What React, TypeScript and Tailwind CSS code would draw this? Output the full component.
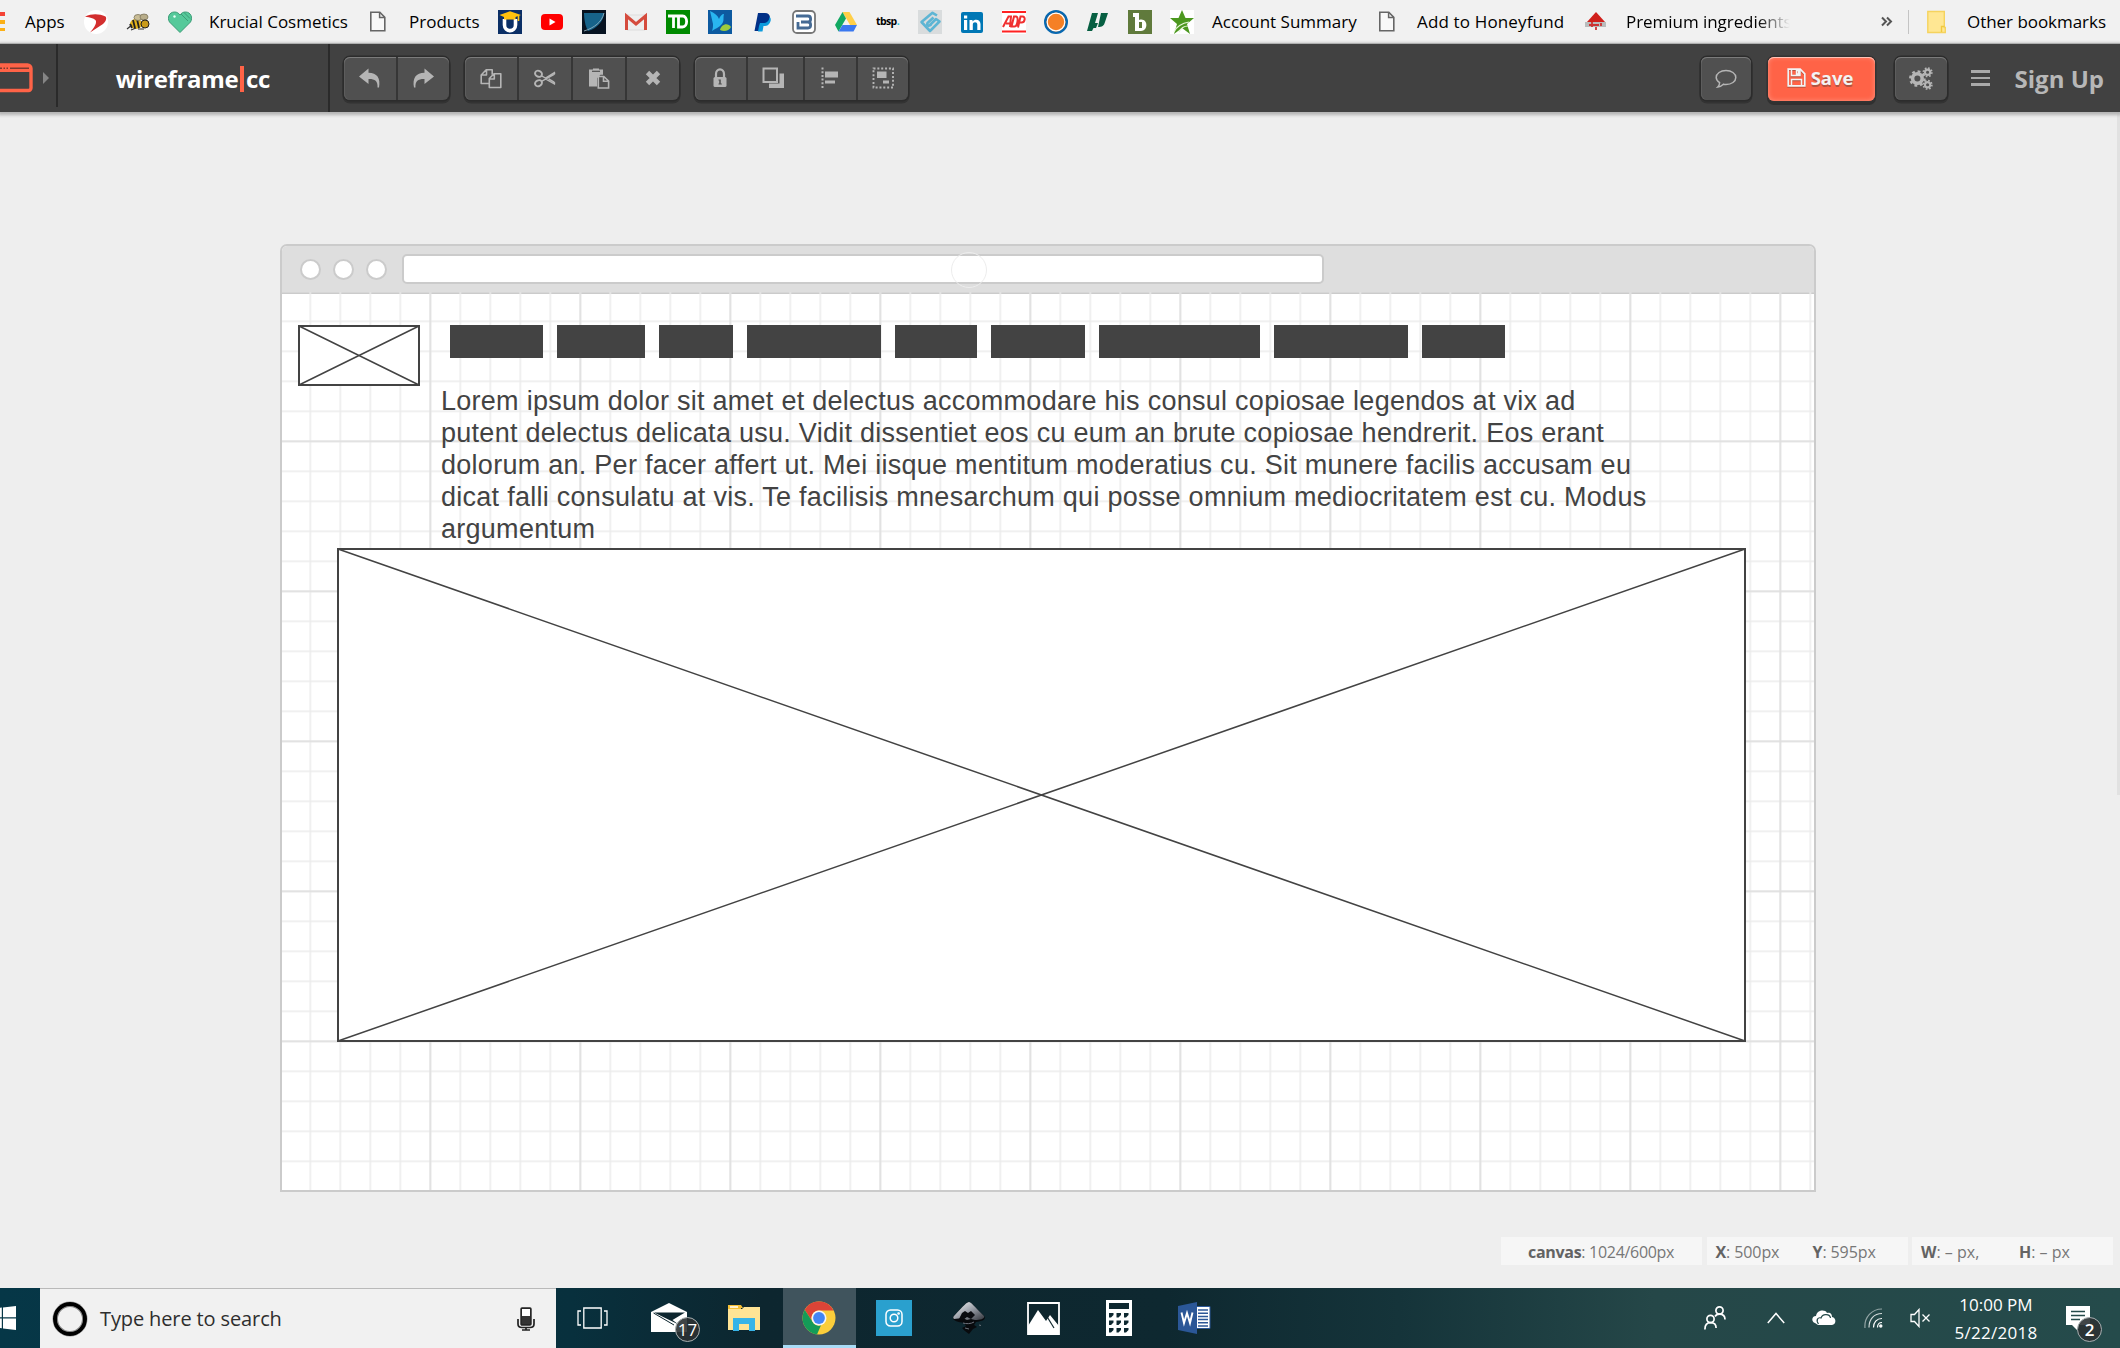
import type { ReactNode } from "react";

const SANS = "font-['Open_Sans','Noto_Sans',sans-serif]";

/* ---------- Bookmark bar ---------- */

function Fav({ children }: { children: ReactNode }) {
  return (
    <svg className="mr-[18px] h-6 w-6 shrink-0" viewBox="0 0 24 24">
      {children}
    </svg>
  );
}

function DocIcon() {
  return (
    <Fav>
      <path d="M1.8 2.2h9l5 5.2v13.4h-14z" fill="#f8f8f8" stroke="#666" strokeWidth="1.6" />
      <path d="M10.6 2.2v5.4h5.2" fill="none" stroke="#666" strokeWidth="1.5" />
    </Fav>
  );
}

function Label({ children, className }: { children: ReactNode; className: string }) {
  return (
    <span className={`block shrink-0 pl-px text-[17px] leading-6 whitespace-nowrap text-black ${className}`}>
      {children}
    </span>
  );
}

function BookmarkBar() {
  return (
    <div className="flex h-11 items-center overflow-hidden border-b border-[#a5a8a8] bg-[#f1f1f1]">
      <svg className="mr-[18px] h-6 w-[6px] shrink-0" viewBox="0 0 6 24">
        <path d="M0 2h5v4H0z" fill="#f44336" />
        <path d="M0 10h5v4H0zM0 18h5v3H0z" fill="#fbb017" />
      </svg>
      <Label className="w-[60px]">Apps</Label>
      <Fav>
        <circle cx="12" cy="12" r="12" fill="#fff" />
        <path d="M1 6.500c7-3 14-2.800 20.500 0 1.500 1.500.5 5-2.500 7.500l-13 8.500c3.500-4 6.500-8 6-11.500C11.500 8.500 6 7.500 1 6.500z" fill="#d32f2f" />
      </Fav>
      <Fav>
        <ellipse cx="10" cy="14" rx="6" ry="5" fill="#e3b21a" />
        <path d="M7 10l2 8M11 9l2 9M4 14l2 4" stroke="#222" strokeWidth="1.8" />
        <ellipse cx="12" cy="7.500" rx="4" ry="3" fill="#c9bd96" stroke="#7c735a" strokeWidth=".8" />
        <ellipse cx="18" cy="7" rx="4" ry="3" fill="#b8ad8a" stroke="#7c735a" strokeWidth=".8" />
        <circle cx="19" cy="14" r="4" fill="#c99b1c" stroke="#222" strokeWidth="1" />
        <path d="M1 19l5-4M5 20l5-2M12 19l6 0" stroke="#333" strokeWidth="1.200" />
      </Fav>
      <Fav>
        <path d="M12 22.500L1.500 12C-1 8 1 2 6.500 2c2.500 0 4 1 5.500 3 1.500-2 3-3 5.500-3C23 2 25 8 22.500 12z" fill="#55c99a" stroke="#3b9c76" strokeWidth="1" />
        <path d="M13 4l7 7M16 2.500l6 6" stroke="#3b9c76" strokeWidth="1" fill="none" />
        <circle cx="6.500" cy="6.500" r="1.200" fill="#eafff6" />
      </Fav>
      <Label className="-ml-[2px] w-[161px] -tracking-[0.020px]">Krucial Cosmetics</Label>
      <DocIcon />
      <Label className="-ml-[3px] w-[90px]">Products</Label>
      <Fav>
        <path d="M0 0h24v24H0z" fill="#0b2f66" />
        <path d="M6.500 9v6c0 7.500 11 7.500 11 0V9" fill="none" stroke="#fff" strokeWidth="3.600" />
        <path d="M12 1.200L1.500 5 6 7v2.500h11.500V7L23 5z" fill="#ffc20e" />
        <path d="M20.500 5v6" stroke="#ffc20e" strokeWidth="1.600" />
      </Fav>
      <Fav>
        <rect x="1" y="4" width="22" height="16" rx="4" fill="#f00" />
        <path d="M9.500 8.500v7l6-3.500z" fill="#fff" />
      </Fav>
      <Fav>
        <path d="M0 0h24v24H0z" fill="#071321" />
        <path d="M2 3h20c0 7-6 15-16 18C3.500 17 2 9 2 3z" fill="#17638a" />
        <path d="M2 21C12 18 20 12 22 3" fill="none" stroke="#9db9c6" strokeWidth=".8" />
      </Fav>
      <Fav>
        <path d="M3 5h18v15H3z" fill="#eee" stroke="#ddd" />
        <path d="M2.500 20V6L12 14l9.500-8v14" fill="none" stroke="#d54b3d" strokeWidth="3" />
      </Fav>
      <Fav>
        <path d="M0 0h24v24H0z" fill="#008a00" />
        <path d="M2 6h11M7.500 6v12M12.500 6v11h4c5.500 0 5.500-11 0-11z" fill="none" stroke="#fff" strokeWidth="2.800" />
      </Fav>
      <Fav>
        <path d="M0 0h24v24H0z" fill="#0d5aa0" />
        <path d="M2 1c5 2 8 5 9 8 1-3 3-5 5-5-1 3 0 6-1 8-2 5-7 6-11 9 1-3 1-5 1-7z" fill="#29b6f0" />
        <path d="M12 20c1-6 8-8 11-3-2 4-7 5-11 3z" fill="#9dcb3c" />
      </Fav>
      <Fav>
        <path d="M8 3h7c4 0 6 3 4.500 7-1 3-3 4-6.500 4h-2l-1 7H4.500z" fill="#013087" />
        <path d="M19.500 7c2 1 1.500 5-.5 7-1.500 2-3.500 2-5.500 2L12.500 21.500H8l1-5.500 1-3h3c4 0 6-2 6.500-6z" fill="#0c9bdc" />
      </Fav>
      <Fav>
        <rect x="1" y="1" width="22" height="22" rx="4" fill="#fff" stroke="#777" strokeWidth="1.800" />
        <path d="M4 6h12c3.500 0 3.500 6 0 6H9h7c3.500 0 3.500 6 0 6H6V12" fill="none" stroke="#456a94" strokeWidth="2.800" />
      </Fav>
      <Fav>
        <path d="M8.500 2h7L23 15h-7z" fill="#ffcf48" />
        <path d="M8.500 2L1 15l3.500 6.500L12 8.500z" fill="#11a861" />
        <path d="M4.500 21.500L8.500 15H23l-3.500 6.500z" fill="#3a78f0" />
      </Fav>
      <span className="mr-[18px] flex h-6 w-6 shrink-0 items-center text-[10.500px] font-bold -tracking-[0.600px] text-black">
        tbsp<span className="text-[#22c3d6]">.</span>
      </span>
      <Fav>
        <path d="M0 0h24v24H0z" fill="#d9dcdd" />
        <g fill="none" stroke="#5db5d4" strokeWidth="2.600" strokeLinejoin="round">
          <path d="M19 5.500L14.500 2.800 3.500 12l8.500 9 9.500-9.500-3.500-2.500-6 6" />
          <path d="M15.500 7.500l-6 5.500c-1 2.500 1.500 3.500 3.500 1.500" />
        </g>
      </Fav>
      <Fav>
        <rect x="1" y="2" width="22" height="21" rx="2" fill="#0077b5" />
        <path d="M4 10h3.200v10H4zM4 5.500h3.200v3H4zM9.500 10h3v1.500c2-3 8-2.500 8 2.500v6h-3.200v-5.500c0-3-4.500-3-4.500 0V20H9.500z" fill="#fff" />
      </Fav>
      <Fav>
        <path d="M0 0h24v24H0z" fill="#fff" />
        <path d="M0 2h24M0 21.500h24" stroke="#f22" strokeWidth="1.800" />
        <path d="M1 17L6.500 6.500h2.500L8 17M4 13.500h4.500M9.500 16.500l2.500-10h2c3 0 1.500 10-1.500 10zM16 17.500l2.500-11h2c3.500 0 2.500 6-1 6h-2.500" fill="none" stroke="#f03030" strokeWidth="2" />
      </Fav>
      <Fav>
        <circle cx="12" cy="12" r="10.800" fill="#f58025" stroke="#0868b0" strokeWidth="2.400" />
        <circle cx="12" cy="12" r="8.800" fill="none" stroke="#fff" strokeWidth="1.200" />
      </Fav>
      <Fav>
        <path d="M6 3h6l-3 10h3l-2 5H7.500l-1.500 3H1z" fill="#075f42" />
        <path d="M15 3h7l-3 9c-1 4-3 5-7 5z" fill="#075f42" />
      </Fav>
      <Fav>
        <path d="M0 0h24v24H0z" fill="#607a3c" />
        <path d="M5 3h6v7c9-3 10 11 2 11H7V7H5z" fill="#fff" />
        <path d="M11 12h3v6h-3z" fill="#607a3c" />
      </Fav>
      <Fav>
        <path d="M0 0h24v24H0z" fill="#fff" />
        <path d="M12 0l3.500 8H24l-7 6 3 10-8-6-8 6 3-10-7-6h8.500z" fill="#4c981f" />
        <path d="M4 22c2-5 8-9 15-10M9 22c2-4 6-6 9-6" fill="none" stroke="#e6f5d8" strokeWidth="1.200" />
      </Fav>
      <Label className="-ml-px w-[167px]">Account Summary</Label>
      <DocIcon />
      <Label className="-ml-[4px] w-[168px] tracking-[0.150px]">Add to Honeyfund</Label>
      <Fav>
        <path d="M12 2l9 10H3z" fill="#d0201b" />
        <path d="M1 12h21v5H1z" fill="#b9bcbc" />
        <path d="M5 15h10M8 12v5M17 13v3M12 17v3" stroke="#c33" strokeWidth="1.800" />
      </Fav>
      <Label className="-ml-px mr-[86px] w-[170px] -tracking-[0.050px] [mask-image:linear-gradient(to_right,#000_78%,transparent_97%)]">
        Premium ingredients
      </Label>
      <svg className="h-3 w-[27px] shrink-0" viewBox="0 0 27 12">
        <path d="M1 1.500l4 4-4 4M6 1.500l4 4-4 4" fill="none" stroke="#555" strokeWidth="2" />
      </svg>
      <span className="mr-[18px] h-6 w-px shrink-0 bg-[#c4c4c4]" />
      <Fav>
        <path d="M.8 1.500h16.500v16h1v5H.8z" fill="#ffe793" stroke="#f5d35e" strokeWidth="1.400" />
        <path d="M14.500 22v-5.500h3" stroke="#f0c93f" strokeWidth="1.400" fill="none" />
      </Fav>
      <Label className="-ml-[3px] -tracking-[0.040px]">Other bookmarks</Label>
    </div>
  );
}

/* ---------- Editor toolbar ---------- */

function Icon({ children, className = "h-6 w-6" }: { children: ReactNode; className?: string }) {
  return (
    <svg className={className} viewBox="0 0 24 24" fill="#b5b5b5">
      {children}
    </svg>
  );
}

function Group({ children, className = "" }: { children: ReactNode[] | ReactNode; className?: string }) {
  return (
    <div
      className={`flex h-[43px] shrink-0 divide-x-2 divide-[#363636] overflow-visible rounded-[6px] bg-[#505050] shadow-[inset_0_1px_0_#7b7b7b,inset_1px_0_0_#5d5d5d,0_0_0_1.500px_#2c2c2c,0_2px_0_1.500px_#333] ${className}`}
    >
      {children}
    </div>
  );
}

function Btn({ children, className = "" }: { children: ReactNode; className?: string }) {
  return <button className={`flex flex-1 items-center justify-center ${className}`}>{children}</button>;
}

const REPLY = "M1 10.500L10.500 2.500v4.200C19 6.700 22.800 12 21 21.500h-1.500c.6-6.800-3-8.800-9-8.600v5z";

function Toolbar() {
  return (
    <header className="relative z-10 flex h-[68px] items-center bg-[#414141] shadow-[0_1px_3px_2px_#b4b4b4]">
      <div className="flex h-full w-[56px] items-center">
        <svg className="h-[30px] w-[50px]" viewBox="0 0 50 30">
          <path d="M-4 2h31.500a3.500 3.500 0 0 1 3.500 3.500v19.500a2.500 2.500 0 0 1-2.500 2.500H-4" fill="none" stroke="#ff6347" strokeWidth="3.400" />
          <path d="M0 3h30v6H0z" fill="#ff6347" />
          <path d="M0 5.200h2M3.500 5.200h1.500M6.500 5.200h1.500M10 5.200h19" stroke="#7a3a30" strokeWidth="1.500" />
          <path d="M43 9l6 6-6 6z" fill="#858585" />
        </svg>
      </div>
      <span className="-mt-[5px] h-[63px] w-[2px] bg-[#2a2a2a]" />
      <div className="mt-px flex w-[270px] items-center justify-center text-[24px] leading-none font-bold text-white">
        <span className="-tracking-[0.300px]">wireframe</span>
        <span className="mx-[2px] h-[26px] w-[3.500px] bg-[#ff6347]" />
        <span className="-tracking-[0.200px]">cc</span>
      </div>
      <span className="h-full w-[2px] bg-[#2a2a2a]" />

      <Group className="ml-[14px] w-[105px]">
        <Btn>
          <Icon>
            <path d={REPLY} />
          </Icon>
        </Btn>
        <Btn>
          <Icon className="h-6 w-6 -scale-x-100">
            <path d={REPLY} />
          </Icon>
        </Btn>
      </Group>

      <Group className="ml-4 w-[214px]">
        <Btn>
          <Icon>
            <g fill="none" stroke="#b5b5b5" strokeWidth="1.600" strokeLinejoin="round">
              <path d="M10 17.500H2.200V9l5-5.200h6v5M7.500 4v5H2.500" />
              <path d="M10.300 21.500v-9l4.700-4.700h6.800v13.700zM15.300 8v5h-4.800" />
            </g>
          </Icon>
        </Btn>
        <Btn>
          <Icon>
            <g fill="none" stroke="#b5b5b5" strokeWidth="1.900">
              <ellipse cx="5.500" cy="7.800" rx="3.600" ry="2.900" transform="rotate(25 5.500 7.800)" />
              <ellipse cx="5.500" cy="17.200" rx="3.600" ry="2.900" transform="rotate(-25 5.500 17.200)" />
              <path d="M8.500 9.800l4 2.200 9-5.500c.6 1.200.3 1.500-.8 2.200L8.500 15.300M12.500 12.800l9 5.200c.4-1.200 0-1.600-.8-2.100l-5-3" strokeWidth="1.400" />
            </g>
          </Icon>
        </Btn>
        <Btn>
          <Icon>
            <path d="M2 3.500h4V2.500h6v1h4v5.200h-2.500l-3.500 3.500V20.500H2z" />
            <path d="M5 5.300h8" stroke="#505050" strokeWidth="1.200" />
            <path d="M11.300 10.500h5.500l4.800 4.500v7H11.300zM16.500 10.500v4.700h5" fill="#505050" stroke="#b5b5b5" strokeWidth="1.600" />
          </Icon>
        </Btn>
        <Btn>
          <Icon>
            <path d="M6.500 6.500l11 11M17.500 6.500l-11 11" stroke="#b5b5b5" strokeWidth="4.800" />
          </Icon>
        </Btn>
      </Group>

      <Group className="ml-4 w-[213px]">
        <Btn className="pr-px">
          <Icon>
            <rect x="5.500" y="11" width="13" height="10" rx="1.500" />
            <path d="M8 11.500V8a4 4.600 0 0 1 8 0v3.500" fill="none" stroke="#b5b5b5" strokeWidth="2.200" />
            <path d="M10.500 13.500h2.300v4h1v1h-3.300v-1h.7v-3h-.7z" fill="#505050" />
          </Icon>
        </Btn>
        <Btn className="pr-1">
          <Icon>
            <path d="M2.500 2.500h13.500v13.500H2.500z" fill="none" stroke="#b5b5b5" strokeWidth="2" />
            <path d="M18.500 7.500h4.500v14.500H8V17.500h10.500z" />
          </Icon>
        </Btn>
        <Btn className="pr-px">
          <Icon>
            <path d="M4.500 1.500v21" stroke="#b5b5b5" strokeWidth="2" strokeDasharray="2 1.700" />
            <path d="M7 5.500h13v6H7zM7 14.500h10v3H7z" />
          </Icon>
        </Btn>
        <Btn>
          <Icon>
            <path d="M2.500 2.500h19.500v19H2.500z" fill="none" stroke="#b5b5b5" strokeWidth="1.900" strokeDasharray="2 1.850" />
            <path d="M6 5.500h9.500v6.500H6zM12 14.500h6v3h-6z" />
          </Icon>
        </Btn>
      </Group>

      <div className="ml-auto flex items-center pr-[16px]">
        <Group className="w-[50px]">
          <Btn>
            <Icon>
              <path
                d="M12 4.500c5.500 0 9.800 3 9.800 7s-4.300 7-9.800 7c-1 0-1.800-.1-2.600-.3-1.800 1.800-3.500 2.500-5.600 2.800 1-1 1.700-2.300 1.800-4.300C3.500 15.300 2.200 13.600 2.200 11.500c0-4 4.300-7 9.800-7z"
                fill="none"
                stroke="#b5b5b5"
                strokeWidth="1.500"
              />
            </Icon>
          </Btn>
        </Group>
        <button className="mt-px ml-[17px] flex h-[44px] w-[107px] items-center justify-center rounded-[6px] bg-[#ff6347] pr-[2px] text-[18.500px] leading-none font-bold text-[#f3f3f3] shadow-[inset_0_1px_0_#ffc2b6,inset_0_0_5px_#ff9480,0_0_0_1.500px_#333,0_3px_0_1px_#303030] [text-shadow:0_2px_0_#b5523f]">
          <svg className="mr-[5px] mb-[3px] h-[19px] w-[19px] drop-shadow-[0_1px_0_#b5523f]" viewBox="0 0 19 19">
            <path d="M1.200 1.200h12l4.600 4.600v12H1.200z" fill="none" stroke="#f3f3f3" strokeWidth="1.700" />
            <path d="M4.500 1.500v6h8.500v-6M4.500 17.500v-6h10v6M9.500 2.500v3.500h2V2.500z" fill="none" stroke="#f3f3f3" strokeWidth="1.500" />
          </svg>
          Save
        </button>
        <Group className="ml-[20px] w-[52px]">
          <Btn>
            <Icon className="h-[25px] w-[25px]">
              <g fill="none" stroke="#b5b5b5">
                <circle cx="9" cy="12" r="4.600" strokeWidth="3.400" />
                <circle cx="9" cy="12" r="6.900" strokeWidth="2.200" strokeDasharray="2.710 2.710" />
                <circle cx="18.800" cy="6" r="2.500" strokeWidth="2" />
                <circle cx="18.800" cy="6" r="4.100" strokeWidth="1.600" strokeDasharray="1.610 1.610" />
                <circle cx="18.800" cy="18" r="2.500" strokeWidth="2" />
                <circle cx="18.800" cy="18" r="4.100" strokeWidth="1.600" strokeDasharray="1.610 1.610" />
              </g>
            </Icon>
          </Btn>
        </Group>
        <div className="ml-[24px] flex w-[19px] flex-col gap-1">
          <span className="h-[2.500px] bg-[#a9a9a9]" />
          <span className="h-[2.500px] bg-[#a9a9a9]" />
          <span className="h-[2.500px] bg-[#a9a9a9]" />
        </div>
        <span className="mt-px ml-[25px] text-[24px] leading-none font-bold text-[#b7b7b7]">Sign Up</span>
      </div>
    </header>
  );
}

/* ---------- Wireframe canvas ---------- */

const NAV_BARS = [
  "ml-0 w-[93px]",
  "ml-[14px] w-[88px]",
  "ml-[14px] w-[74px]",
  "ml-[14px] w-[134px]",
  "ml-[14px] w-[82px]",
  "ml-[14px] w-[94px]",
  "ml-[14px] w-[161px]",
  "ml-[14px] w-[134px]",
  "ml-[14px] w-[83px]",
];

const LOREM = [
  "Lorem ipsum dolor sit amet et delectus accommodare his consul copiosae legendos at vix ad",
  "putent delectus delicata usu. Vidit dissentiet eos cu eum an brute copiosae hendrerit. Eos erant",
  "dolorum an. Per facer affert ut. Mei iisque mentitum moderatius cu. Sit munere facilis accusam eu",
  "dicat falli consulatu at vis. Te facilisis mnesarchum qui posse omnium mediocritatem est cu. Modus",
  "argumentum",
];

function Placeholder({ w, h, className }: { w: number; h: number; className: string }) {
  return (
    <svg className={`absolute bg-white ${className}`} viewBox={`0 0 ${w} ${h}`} fill="none" stroke="#434343">
      <path d={`M1 1H${w - 1}V${h - 1}H1z`} strokeWidth="2" />
      <path d={`M1 1L${w - 1} ${h - 1}M${w - 1} 1L1 ${h - 1}`} strokeWidth="1.500" />
    </svg>
  );
}

function Canvas() {
  return (
    <section className="ml-[280px] flex h-[948px] w-[1536px] flex-col overflow-hidden rounded-t-[7px] border-2 border-[#cbcbcb] bg-white">
      <div className="flex h-12 shrink-0 items-center border-b-2 border-[#cbcbcb] bg-[#dedede] pl-[18px]">
        {[0, 1, 2].map((n) => (
          <span key={n} className="mr-[12px] h-[21px] w-[21px] shrink-0 rounded-full border-2 border-[#cbcbcb] bg-white" />
        ))}
        <div className="ml-[3px] flex h-[30px] w-[922px] items-center rounded-[5px] border-2 border-[#cbcbcb] bg-white">
          <span className="mt-[2px] ml-[547px] h-9 w-9 shrink-0 rounded-full border border-[#ededed]" />
        </div>
      </div>
      <div className="relative -mt-0.5 flex-1">
        <svg className="absolute inset-0 h-full w-full">
          <defs>
            <pattern id="minor" x="27.500" y="28.500" width="30" height="30" patternUnits="userSpaceOnUse">
              <path d="M.75 0v30M0 .75h30" stroke="#ebebeb" strokeWidth="1.500" />
            </pattern>
            <pattern id="major" x="147.500" y="148.500" width="150" height="150" patternUnits="userSpaceOnUse">
              <path d="M.75 0v150M0 .75h150" stroke="#dedede" strokeWidth="1.500" />
            </pattern>
          </defs>
          <rect width="100%" height="100%" fill="url(#minor)" />
          <rect width="100%" height="100%" fill="url(#major)" />
        </svg>
        <Placeholder w={122} h={61} className="top-[33px] left-[16px] h-[61px] w-[122px]" />
        <div className="absolute top-[33px] left-[168px] flex">
          {NAV_BARS.map((bar, n) => (
            <span key={n} className={`h-[33px] bg-[#434343] ${bar}`} />
          ))}
        </div>
        <div className="absolute top-[93px] left-[159px] font-['Liberation_Sans',Arial,sans-serif] text-[27px] leading-[32px] tracking-[0.270px] whitespace-nowrap text-[#434343]">
          {LOREM.map((line) => (
            <p key={line}>{line}</p>
          ))}
        </div>
        <Placeholder w={1409} h={494} className="top-[256px] left-[55px] h-[494px] w-[1409px]" />
      </div>
    </section>
  );
}

function StatusPanels() {
  return (
    <div className="mt-[45px] mr-[7px] flex h-7 justify-end gap-[4.500px] text-[16px] leading-[30px] text-[#777] [&_b]:text-[#636363]">
      <div className="w-[201px] bg-[#f6f6f6] pl-[27px] -tracking-[0.300px]">
        <b>canvas</b>: 1024/600px
      </div>
      <div className="flex w-[201px] bg-[#f6f6f6] pl-[9px]">
        <span className="w-[97px] -tracking-[0.100px]">
          <b>X</b>: 500px
        </span>
        <span className="-tracking-[0.100px]">
          <b>Y</b>: 595px
        </span>
      </div>
      <div className="flex w-[201px] bg-[#f6f6f6] pl-[9px]">
        <span className="w-[98px]">
          <b>W</b>: – px,
        </span>
        <span>
          <b>H</b>: – px
        </span>
      </div>
    </div>
  );
}

/* ---------- Windows taskbar ---------- */

function CountBadge({ children, className }: { children: ReactNode; className: string }) {
  return (
    <span className={`absolute flex h-[25px] w-[25px] items-center justify-center rounded-full border border-[#a8b0b2] bg-[#2b3133e6] text-[17px] leading-none text-white ${className}`}>
      {children}
    </span>
  );
}

function Taskbar() {
  return (
    <footer className="flex h-[60px] w-full items-center bg-[linear-gradient(90deg,#063747_0%,#08303d_27%,#0d262f_36%,#0e2830_55%,#15343a_66%,#254748_78%,#254b4b_100%)] text-white">
      <div className="flex w-10 shrink-0 items-center">
        <svg className="h-6 w-4" viewBox="0 0 16 24" fill="#fff">
          <path d="M0 1.800L1.800 1.600V11.200H0zM3 1.400L16 0v11.200H3zM0 12.600h1.800v9.600L0 22zM3 12.600h13V24L3 22.400z" />
        </svg>
      </div>
      <div className="flex h-full w-[516px] shrink-0 items-center border-t border-[#b9b9b9] bg-[#f1f1f1] pl-[13px]">
        <span className="h-[34px] w-[34px] rounded-full border-[4px] border-black shadow-[inset_0_0_0_1px_#888,0_0_0_0.500px_#999]" />
        <span className="mt-px ml-[13px] flex-1 text-[20px] leading-8 -tracking-[0.120px] text-[#2e2e2e]">Type here to search</span>
        <svg className="mr-[21px] h-6 w-[18px]" viewBox="0 0 18 24">
          <rect x="4" y="1" width="10" height="17" rx="1" fill="#333" stroke="#222" strokeWidth="1.400" />
          <path d="M5 2h8v7H5z" fill="#fff" />
          <path d="M1 12v5c0 3 2 3.500 4 3.500h8c2 0 4-.5 4-3.500v-5M9 20.500v2.500M5 23h8" fill="none" stroke="#222" strokeWidth="1.700" />
        </svg>
      </div>

      <svg className="ml-[21px] h-[22px] w-[31px] shrink-0" viewBox="0 0 31 22" fill="none" stroke="#fff" strokeWidth="1.300">
        <path d="M6.800 1h17.400v20H6.800zM4 4H1v14h3M27 4h3v14h-3" />
      </svg>

      <div className="relative ml-[43px] h-8 w-[36px] shrink-0">
        <svg className="h-8 w-[36px]" viewBox="0 0 36 32">
          <path d="M0 10L18 1l18 9v20H0z" fill="#fff" />
          <path d="M3 10.500h31L21.500 18l6 4.500z" fill="#0d262f" />
          <path d="M2.500 11L23 23" stroke="#0d262f" strokeWidth="1" />
        </svg>
        <CountBadge className="top-[15px] left-[24px]">17</CountBadge>
      </div>

      <svg className="ml-[41px] h-7 w-8 shrink-0" viewBox="0 0 32 28">
        <path d="M0 1h13l2 3h-2v4H0z" fill="#f5bf35" />
        <path d="M0 5h14l2-2h16v23H0z" fill="#ffe495" />
        <path d="M2 3h8" stroke="#fff" strokeWidth="1.500" />
        <path d="M5 27V14h22v13h-6v-7H11v7z" fill="#37b4e8" />
      </svg>

      <div className="ml-[23px] flex h-full w-[73px] shrink-0 items-center justify-center border-b-[3px] border-[#a9dcf6] bg-[#40545d] pr-[2px]">
        <svg className="mt-[3px] h-[34px] w-[34px]" viewBox="0 0 34 34">
          <circle cx="17" cy="17" r="16.500" fill="#fbce3b" />
          <path d="M17 .5A16.500 16.500 0 0 1 31.500 9.500H17a7.500 7.500 0 0 0-6.500 11.300L2.700 8.700A16.500 16.500 0 0 1 17 .5z" fill="#dc4437" />
          <path d="M2.700 8.700L10.500 20.800A7.500 7.500 0 0 0 19 24.300L15 33.400A16.500 16.500 0 0 1 2.700 8.700z" fill="#149b58" />
          <circle cx="17" cy="17" r="7.500" fill="#f5f5f5" />
          <circle cx="17" cy="17" r="5.900" fill="#4286f5" />
        </svg>
      </div>

      <div className="ml-[20px] flex h-9 w-9 shrink-0 items-center justify-center bg-[#2aa0ce]">
        <svg className="h-[18px] w-[18px]" viewBox="0 0 18 18" fill="none" stroke="#fff" strokeWidth="1.500">
          <rect x="1" y="1" width="16" height="16" rx="4.500" />
          <circle cx="9" cy="9" r="3.800" />
          <circle cx="13.600" cy="4.500" r=".6" />
        </svg>
      </div>

      <svg className="ml-[40px] h-[34px] w-[34px] shrink-0" viewBox="0 0 34 34">
        <defs>
          <linearGradient id="ink" x1="0" y1="0" x2="1" y2="1">
            <stop offset="0" stopColor="#fff" />
            <stop offset=".5" stopColor="#9a9fa8" />
            <stop offset="1" stopColor="#33363d" />
          </linearGradient>
        </defs>
        <path d="M17 1c2 0 4 3 15 14 3 4-3 5-8 6l-2 3 3 2-4 2-4 5-4-3-3-3 4-2-2-3C6 21 0 20 1 16 12 4 15 1 17 1z" fill="#080a0d" />
        <path d="M17 1c2 0 4 3 15 14 1 3-4 4-9 4l-4-1-4 1-4-2-9 1C1 17 1 16 2 15 12 4 15 1 17 1z" fill="url(#ink)" />
        <path d="M10 12l3-2 3 2 3-2 4 4-4 4-4-2-4 3-4-1z" fill="#0a0c10" />
        <path d="M11 22c3 1 8 1 11-1M13 27l4 1M27 24l2 .5" stroke="#6d727b" strokeWidth="1" fill="none" />
      </svg>

      <svg className="ml-[41px] h-[34px] w-[33px] shrink-0" viewBox="0 0 33 34">
        <path d="M1 2h31v31H1z" fill="#0e262e" stroke="#fff" strokeWidth="1.800" />
        <path d="M1 25L11 9l8 11 4-6 9 11v8H1z" fill="#fff" />
        <path d="M19 14l8 13" stroke="#0e262e" strokeWidth="1.200" />
      </svg>

      <svg className="ml-[46px] h-9 w-[26px] shrink-0" viewBox="0 0 26 36">
        <path d="M0 0h26v36H0z" fill="#fff" />
        <path d="M3 3h20v6H3z" fill="#0e2830" />
        <path d="M3 13h4.500v2L5 17.500H3zM10.500 13H15v2l-2.500 2.500h-2zM18 13h4.500v2L20 17.500h-2zM3 20.500h4.500v2L5 25H3zM10.500 20.500H15v2L12.500 25h-2zM18 20.500h4.500v2L20 25h-2zM3 28h4.500v2L5 32.500H3zM10.500 28H15v2l-2.500 2.500h-2zM18 28h4.500v2L20 32.500h-2z" fill="#0e2830" />
      </svg>

      <div className="ml-[46px] h-8 w-[33px] shrink-0">
        <svg className="h-8 w-[33px]" viewBox="0 0 33 32">
          <path d="M18 4.500h14v22H18z" fill="#fff" stroke="#2b5797" strokeWidth="1" />
          <path d="M20 8h10M20 11.200h10M20 14.400h10M20 17.600h10M20 20.800h10M20 24h10" stroke="#2b5797" strokeWidth="1.500" />
          <path d="M0 4L19 0v32L0 28z" fill="#2b5797" />
          <path d="M3.500 10.500l2.500 10.500 3-10 3 10 2.500-10.500" fill="none" stroke="#fff" strokeWidth="1.900" />
        </svg>
      </div>

      <svg className="ml-auto h-6 w-[22px] shrink-0" viewBox="0 0 22 24" fill="none" stroke="#fff" strokeWidth="1.700">
        <circle cx="15.500" cy="4.500" r="3.600" />
        <path d="M11 10.500c1-1.800 2.700-2.400 4.500-2.400 3.500 0 5.500 2 5.500 5.400" />
        <circle cx="6.500" cy="13" r="3.600" />
        <path d="M.9 23.500c0-4.500 2.100-6.800 5.600-6.800s5.600 1.800 5.600 5.300" />
      </svg>
      <svg className="ml-[41px] h-[12px] w-[18px] shrink-0" viewBox="0 0 18 12" fill="none" stroke="#fff" strokeWidth="1.500">
        <path d="M.8 11L9 1.500 17.200 11" />
      </svg>
      <svg className="ml-[27px] h-[16px] w-[24px] shrink-0" viewBox="0 0 24 16">
        <path d="M3 13c-4-1-3.500-7 1-7C5 0 13-1 15 3c4-1 5 2 5 4 5 1 4 8 0 8H6z" fill="#fff" />
        <path d="M6.500 14C3.500 10 6 7 9 8c1.500-5 9-4 9.500 0" fill="none" stroke="#254949" strokeWidth="1.200" />
      </svg>
      <svg className="ml-[28px] h-[20px] w-[19px] shrink-0" viewBox="0 0 19 20" fill="none" stroke="#fff" strokeWidth="1.200">
        <path d="M1 20C0 9 8 1 18 1" opacity=".5" />
        <path d="M5 19.500C5 11 10 5.500 18 5.500" opacity=".8" />
        <path d="M9.500 19.500c0-5 3-9 8.500-9M13.500 19.500c0-3 1.500-5 4.500-5" />
        <circle cx="16.800" cy="18" r="1.100" fill="#fff" />
      </svg>
      <svg className="ml-[27px] h-[20px] w-[21px] shrink-0" viewBox="0 0 21 20" fill="none" stroke="#fff" strokeWidth="1.300">
        <path d="M1 6.500h3.500L9 1.500v17l-4.500-5H1zM12.500 6.500l7 7M19.500 6.500l-7 7" />
      </svg>
      <div className="mt-px ml-[20px] flex w-[90px] flex-col items-center text-[17px] leading-[28px] whitespace-nowrap">
        <span>10:00 PM</span>
        <span className="tracking-[0.300px]">5/22/2018</span>
      </div>
      <div className="relative mr-[30px] ml-[25px] h-6 w-6 shrink-0">
        <svg className="h-6 w-6" viewBox="0 0 24 24">
          <path d="M0 0h24v19H13l-2 5-5-5H0z" fill="#fff" />
          <path d="M5 5.500h14M5 9.500h14M5 13.500h9" stroke="#254a4a" strokeWidth="1.300" />
        </svg>
        <CountBadge className="top-[11px] left-[11px] font-semibold">2</CountBadge>
      </div>
    </footer>
  );
}

export default function App() {
  return (
    <div className={`flex h-[1348px] w-[2120px] flex-col overflow-hidden bg-[#eee] ${SANS}`}>
      <BookmarkBar />
      <Toolbar />
      <main className="flex flex-1 items-start">
        <div className="flex-1 pt-[132px]">
          <Canvas />
          <StatusPanels />
        </div>
        <div className="-ml-[3px] h-[683px] w-[3px] bg-[#e1e1e1]" />
      </main>
      <Taskbar />
    </div>
  );
}
